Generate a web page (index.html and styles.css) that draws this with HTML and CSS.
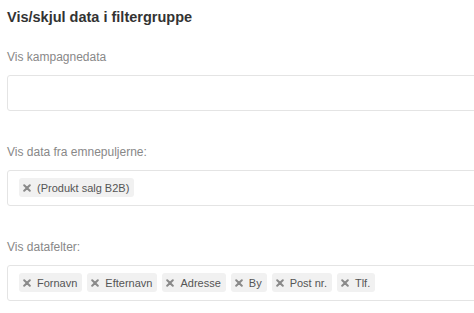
FILE: index.html
```html
<!DOCTYPE html>
<html lang="no">
<head>
<meta charset="utf-8">
<link rel="stylesheet" href="styles.css">
</head>
<body>
<div class="panel">
  <h2 class="title">Vis/skjul data i filtergruppe</h2>

  <div class="field">
    <div class="label">Vis kampagnedata</div>
    <div class="box"></div>
  </div>

  <div class="field">
    <div class="label">Vis data fra emnepuljerne:</div>
    <div class="box">
      <span class="tag"><svg class="x" viewBox="0 0 8 8"><path d="M1.2 1.2L6.8 6.8M6.8 1.2L1.2 6.8"/></svg>(Produkt salg B2B)</span>
    </div>
  </div>

  <div class="field">
    <div class="label">Vis datafelter:</div>
    <div class="box">
      <span class="tag"><svg class="x" viewBox="0 0 8 8"><path d="M1.2 1.2L6.8 6.8M6.8 1.2L1.2 6.8"/></svg>Fornavn</span>
      <span class="tag"><svg class="x" viewBox="0 0 8 8"><path d="M1.2 1.2L6.8 6.8M6.8 1.2L1.2 6.8"/></svg>Efternavn</span>
      <span class="tag"><svg class="x" viewBox="0 0 8 8"><path d="M1.2 1.2L6.8 6.8M6.8 1.2L1.2 6.8"/></svg>Adresse</span>
      <span class="tag"><svg class="x" viewBox="0 0 8 8"><path d="M1.2 1.2L6.8 6.8M6.8 1.2L1.2 6.8"/></svg>By</span>
      <span class="tag"><svg class="x" viewBox="0 0 8 8"><path d="M1.2 1.2L6.8 6.8M6.8 1.2L1.2 6.8"/></svg>Post nr.</span>
      <span class="tag"><svg class="x" viewBox="0 0 8 8"><path d="M1.2 1.2L6.8 6.8M6.8 1.2L1.2 6.8"/></svg>Tlf.</span>
    </div>
  </div>
</div>
</body>
</html>
```
FILE: styles.css
```css
html, body {
  margin: 0;
  padding: 0;
  background: #fff;
  overflow: hidden;
}
body {
  font-family: "Liberation Sans", Arial, sans-serif;
  padding: 9px 0 0 7px;
}
.panel {
  width: 520px;
}
.title {
  margin: 0 0 24px;
  font-size: 14.5px;
  line-height: 17px;
  font-weight: bold;
  color: #333;
}
.field {
  margin-bottom: 34px;
}
.field:last-child {
  margin-bottom: 0;
}
.label {
  font-size: 12px;
  line-height: 15px;
  color: #888;
  margin-bottom: 10px;
}
.box {
  box-sizing: border-box;
  height: 36px;
  border: 1px solid #e4e4e4;
  border-radius: 3px;
  padding: 7px 11px 8px;
  display: flex;
  gap: 5px;
  align-items: flex-start;
}
.tag {
  display: inline-flex;
  align-items: center;
  height: 19px;
  padding: 0 5px 0 4px;
  background: #f1f1f1;
  border-radius: 3px;
  font-size: 11px;
  color: #555;
  white-space: nowrap;
}
.x {
  width: 8px;
  height: 8px;
  margin-right: 6px;
  stroke: #8a8a8a;
  stroke-width: 2;
  stroke-linecap: round;
  fill: none;
}
```
